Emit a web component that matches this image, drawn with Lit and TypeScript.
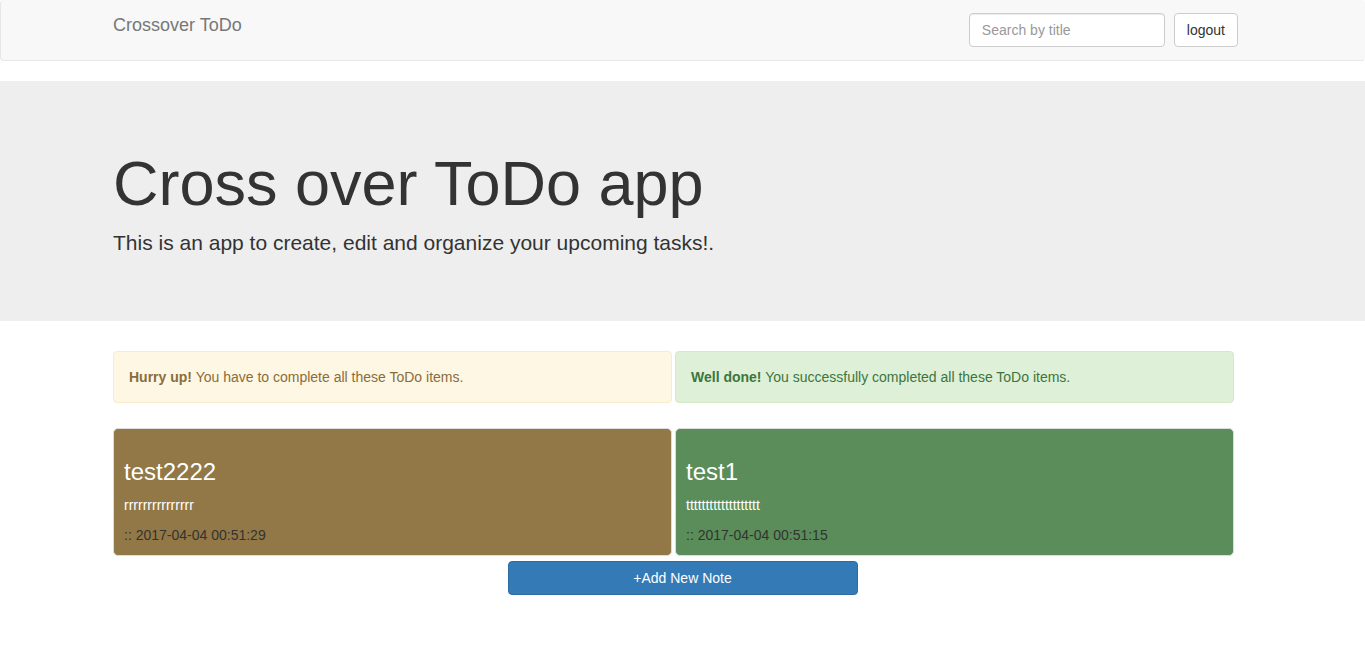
import { LitElement, html, css } from "lit";
import { customElement, property, state } from "lit/decorators.js";

interface Note {
  title: string;
  body: string;
  created: string;
  done: boolean;
}

@customElement("todo-note")
class TodoNote extends LitElement {
  @property({ attribute: false }) note!: Note;

  static styles = css`
    :host {
      display: block;
    }
    .note {
      box-sizing: border-box;
      padding: 10px;
      border: 1px solid #ddd;
      border-radius: 5px;
      background: #927846;
      color: #333;
    }
    .note.done {
      background: #5a8d59;
    }
    .title {
      margin: 20px 0 10px;
      font-size: 24px;
      line-height: 26px;
      font-weight: 500;
      color: #fff;
    }
    .body {
      margin: 0 0 10px;
      color: #fff;
    }
    .date {
      display: block;
    }
  `;

  render() {
    const { title, body, created, done } = this.note;
    return html`
      <article class="note ${done ? "done" : ""}">
        <h3 class="title">${title}</h3>
        <p class="body">${body}</p>
        <time class="date">:: ${created}</time>
      </article>
    `;
  }
}

@customElement("app-root")
class AppRoot extends LitElement {
  @state() private query = "";

  private notes: Note[] = [
    { title: "test2222", body: "rrrrrrrrrrrrrrr", created: "2017-04-04 00:51:29", done: false },
    { title: "test1", body: "ttttttttttttttttttt", created: "2017-04-04 00:51:15", done: true },
  ];

  static styles = css`
    :host {
      display: block;
      font-family: "Liberation Sans", Arial, sans-serif;
      font-size: 14px;
      line-height: 20px;
      color: #333;
      background: #fff;
    }
    * {
      box-sizing: border-box;
    }
    .container {
      max-width: 1169px;
      margin: 0 auto;
      padding: 0 15px;
    }
    .navbar {
      margin-bottom: 20px;
      border: 1px solid #e7e7e7;
      border-top: 0;
      border-right-color: transparent;
      border-radius: 4px;
      background: #f8f8f8;
    }
    .bar {
      display: flex;
      flex-wrap: wrap;
      justify-content: space-between;
      align-items: flex-start;
    }
    .brand {
      padding: 15px 0;
      font-size: 18px;
      color: #777;
      text-decoration: none;
    }
    .search {
      display: flex;
      gap: 9px;
      padding: 13px 14px 13px 0;
    }
    .field {
      width: 196px;
      height: 34px;
      padding: 6px 12px;
      border: 1px solid #ccc;
      border-radius: 4px;
      background: #fff;
      box-shadow: inset 0 1px 1px rgba(0, 0, 0, 0.075);
      color: #555;
      font: inherit;
    }
    .field::placeholder {
      color: #999;
      opacity: 1;
    }
    .btn {
      height: 34px;
      padding: 6px 12px;
      border: 1px solid #ccc;
      border-radius: 4px;
      background: #fff;
      color: #333;
      font: inherit;
      cursor: pointer;
    }
    .btn.primary {
      display: block;
      width: 350px;
      max-width: 100%;
      margin: 5px auto 0;
      border-color: #2e6da4;
      background: #337ab7;
      color: #fff;
    }
    .jumbotron {
      margin-bottom: 30px;
      padding: 48px 0;
      background: #eee;
    }
    .headline {
      margin: 20px 0 10px;
      font-size: 63px;
      line-height: 69px;
      font-weight: 500;
    }
    .lead {
      margin: 0 0 15px;
      font-size: 21px;
      line-height: 30px;
      font-weight: 200;
    }
    .columns {
      display: grid;
      grid-template-columns: 1fr 1fr;
      gap: 25px 3px;
      padding-right: 18px;
    }
    .alert {
      padding: 15px;
      border: 1px solid #faebcc;
      border-radius: 4px;
      background: #fef7e3;
      color: #8a6d3b;
    }
    .alert.success {
      border-color: #d6e9c6;
      background: #dff0d8;
      color: #3c763d;
    }
  `;

  private onSearch(e: Event) {
    this.query = (e.target as HTMLInputElement).value;
  }

  render() {
    const shown = this.notes.filter((n) => n.title.includes(this.query));
    return html`
      <nav class="navbar">
        <div class="container bar">
          <a class="brand" href="#">Crossover ToDo</a>
          <form class="search" @submit=${(e: Event) => e.preventDefault()}>
            <input
              class="field"
              type="text"
              aria-label="Search by title"
              placeholder="Search by title"
              .value=${this.query}
              @input=${this.onSearch}
            />
            <button class="btn" type="button">logout</button>
          </form>
        </div>
      </nav>
      <header class="jumbotron">
        <div class="container">
          <h1 class="headline">Cross over ToDo app</h1>
          <p class="lead">This is an app to create, edit and organize your upcoming tasks!.</p>
        </div>
      </header>
      <main class="container">
        <div class="columns">
          <div class="alert"><strong>Hurry up!</strong> You have to complete all these ToDo items.</div>
          <div class="alert success"><strong>Well done!</strong> You successfully completed all these ToDo items.</div>
          ${[false, true].map(
            (done) => html`<div>
              ${shown.filter((n) => n.done === done).map((n) => html`<todo-note .note=${n}></todo-note>`)}
            </div>`
          )}
        </div>
        <button class="btn primary" type="button">+Add New Note</button>
      </main>
    `;
  }
}
